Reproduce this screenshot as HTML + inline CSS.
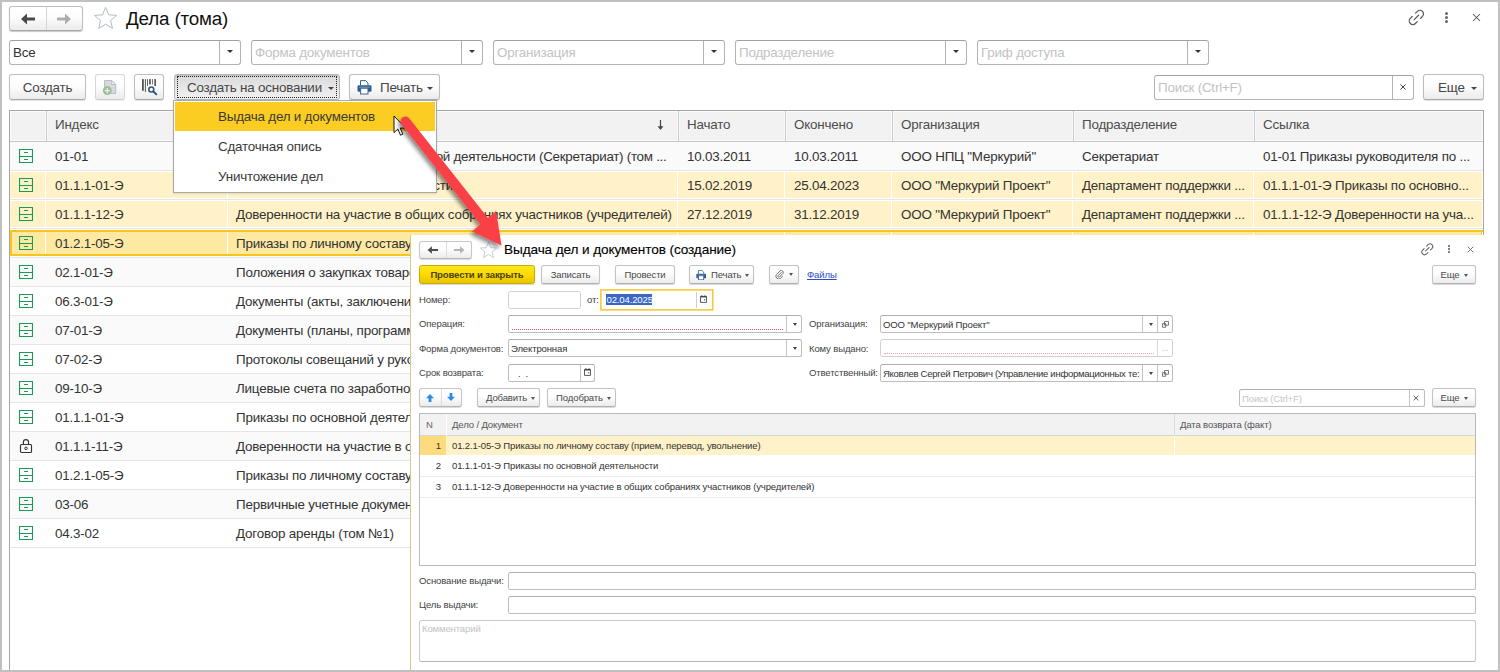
<!DOCTYPE html>
<html lang="ru"><head><meta charset="utf-8"><title>Дела (тома)</title>
<style>
html,body{margin:0;padding:0}
body{width:1500px;height:672px;position:relative;overflow:hidden;background:#fff;font-family:"Liberation Sans",sans-serif;font-size:13.4px;letter-spacing:-0.2px;color:#333;line-height:1}
div,span,a{box-sizing:border-box}
.a{position:absolute}
.frame{position:absolute;left:0;top:0;width:1500px;height:672px;border:2px solid #c0c0c0;z-index:50;pointer-events:none}
/* buttons */
.btn{position:absolute;height:26px;border:1px solid #bdbdbd;border-bottom-color:#a9a9a9;border-radius:3px;background:linear-gradient(#ffffff 0%,#fdfdfd 45%,#ebebeb 100%);box-shadow:0 1px 1px rgba(0,0,0,.13);color:#464646;line-height:25px;text-align:center;white-space:nowrap}
.btn.dis{border-color:#d6d6d6;border-bottom-color:#cdcdcd;box-shadow:0 1px 1px rgba(0,0,0,.07)}
.btn.press{background:linear-gradient(#d9d9d9 0%,#e6e6e6 50%,#f0f0f0 100%);border-color:#b4b4b4;box-shadow:inset 0 1px 1px rgba(0,0,0,.12)}
.caret{display:inline-block;width:0;height:0;border-left:3px solid transparent;border-right:3px solid transparent;border-top:3px solid #444}
/* inputs */
.inp{position:absolute;height:25px;border:1px solid #b3b3b3;border-top-color:#a2a2a2;border-radius:3px;background:#fff;line-height:23px;white-space:nowrap;overflow:hidden}
.inp .t{position:absolute;left:3px;top:0;color:#333}
.inp .ph{color:#c3c3c3}
.inp .dd{position:absolute;right:0;top:0;bottom:0;width:21px;border-left:1px solid #b3b3b3}
.inp .dd i{position:absolute;left:6.5px;top:9px;width:0;height:0;border-left:3px solid transparent;border-right:3px solid transparent;border-top:3.3px solid #333}
/* table */

.tbl{position:absolute;left:9px;top:110px;width:1475px;height:562px;border:1px solid #a6a6a6;border-bottom:none;background:#fff}
.thead{position:absolute;left:0;top:0;width:1473px;height:31px;background:#f2f2f2;border-bottom:1px solid #c6c6c6}
.th{position:absolute;top:0;height:30px;line-height:28px;padding-left:8px;color:#4d4d4d;border-right:1px solid #c9c9c9;box-shadow:inset 0 0 0 1px #fbfbfb;white-space:nowrap}
.th.last{border-right:none}
.sortarrow{position:absolute;left:647px;top:8px}
.tr{position:absolute;left:0;width:1473px;height:29px;background:#fff;border-bottom:1px solid #e6e6e6}
.tr.alt{background:#fafafa}
.tr.hl{background:#fff}
.tr.sel{background:#fff}
.tr .bg{position:absolute;left:0;top:1px;width:1473px;height:26px}
.tr.hl .bg{background:#fff2c8}
.tr.sel .bg{background:#fde9a2;box-shadow:inset 0 0 0 2px #f9c51c}
.td{position:absolute;top:0;height:28px;line-height:30px;padding-left:8px;color:#333;white-space:nowrap;overflow:hidden}
.tr.hl .td,.tr.sel .td{border-right:1px solid #fff;top:1px;height:26px;line-height:28px}
.tr.sel .td{top:3px;height:22px;line-height:24px}
.tr.hl .ic,.tr.sel .ic{top:6px}
.tr.sel .ic{top:4px}
.ic{position:absolute;left:9px;top:7px}
.nav{border:1px solid #bdbdbd;border-bottom-color:#a9a9a9;border-radius:3px;background:linear-gradient(#ffffff 0%,#fdfdfd 45%,#ebebeb 100%);box-shadow:0 1px 1px rgba(0,0,0,.22)}
.menu{background:#fff;border:1px solid #a9a9a9;box-shadow:0 1px 2px rgba(0,0,0,.10)}
.mi{height:29px;line-height:29px;color:#3a3a3a;white-space:nowrap}
/* overlay */
.ov{position:absolute;left:410px;top:235px;width:1088px;height:437px;background:#fff;border-left:1px solid #d6c98f}
.o{position:absolute;font-size:9.55px;letter-spacing:-0.14px;line-height:11px;color:#444;white-space:nowrap}
.ob{position:absolute;height:19px;border:1px solid #c3c3c3;border-bottom-color:#b0b0b0;border-radius:2.5px;background:linear-gradient(#ffffff 0%,#fdfdfd 45%,#ececec 100%);box-shadow:0 1px 1px rgba(0,0,0,.16);color:#4a4a4a;font-size:9.55px;letter-spacing:-0.14px;line-height:17.6px;text-align:center;white-space:nowrap}
.ob.y{background:linear-gradient(#ffe81a 0%,#fbd800 55%,#e8c400 100%);border-color:#c9aa00;color:#4a4200;font-weight:bold}
.oc{display:inline-block;width:0;height:0;border-left:2.5px solid transparent;border-right:2.5px solid transparent;border-top:3px solid #555;vertical-align:middle;margin-left:4px}
.oi{position:absolute;height:18px;border:1px solid #bdbdbd;border-top-color:#adadad;border-radius:2.5px;background:#fff;font-size:9.55px;letter-spacing:-0.14px;line-height:16px;white-space:nowrap;overflow:hidden;color:#333}
.oi .t{position:absolute;left:2px;top:0.5px}
.oi .dd{position:absolute;top:0;bottom:0;width:1px;background:#c4c4c4}
.oi .ar{position:absolute;top:7px;width:0;height:0;border-left:2.5px solid transparent;border-right:2.5px solid transparent;border-top:3px solid #444}
.oi .req{position:absolute;left:3px;right:18px;bottom:2px;border-bottom:1px dotted #f0505a}
.otbl{position:absolute;left:419px;top:413px;width:1057px;height:153px;border:1px solid #b9b9b9;background:#fff}
.oth{position:absolute;left:0;top:0;width:1055px;height:22px;background:#f2f2f2;border-bottom:1px solid #d6d6d6}
.otr{position:absolute;left:0;width:1055px;height:21px;border-bottom:1px solid #ebebeb}
</style></head><body>
<!-- ===== main window header ===== -->
<div class="nav a" style="left:9px;top:6px;width:74px;height:25px">
  <div class="a" style="left:36px;top:0;width:1px;height:23px;background:#d4d4d4"></div>
  <svg class="a" style="left:11px;top:6px" width="15" height="12" viewBox="0 0 15 12"><path d="M0 6L6 0.6V4.4H14V7.6H6V11.4z" fill="#4a4a4a"/></svg>
  <svg class="a" style="left:47px;top:6px" width="15" height="12" viewBox="0 0 15 12"><path d="M14 6L8 0.6V4.4H0V7.6H8V11.4z" fill="#adadad"/></svg>
</div>
<svg class="a" style="left:93px;top:6px" width="26" height="25" viewBox="0 0 26 25"><path d="M12.6 1.4l3.1 7.4 8 .6-6.1 5.2 1.9 7.8-6.9-4.2-6.9 4.2 1.9-7.8-6.1-5.2 8-.6z" fill="none" stroke="#b4bcc4" stroke-width="1"/></svg>
<div class="a" style="left:126px;top:8px;font-size:18.8px;letter-spacing:-0.15px;line-height:22px;color:#111;white-space:nowrap">Дела (тома)</div>

<!-- top-right icons -->
<svg class="a" style="left:1406px;top:7px" width="21" height="21" viewBox="0 0 21 21"><g transform="translate(10.4 10.4) rotate(-45)" fill="none" stroke="#5a5a5a" stroke-width="1.25" stroke-linecap="round"><path d="M2.4-3.6H5A3.6 3.6 0 0 1 5 3.6H2.4"/><path d="M-2.4-3.6H-5A3.6 3.6 0 0 0-5 3.6H-2.4"/><path d="M-3.1 0H3.1"/></g></svg>
<div class="a" style="left:1445px;top:12px;width:3px;height:3px;border-radius:50%;background:#666"></div>
<div class="a" style="left:1445px;top:16px;width:3px;height:3px;border-radius:50%;background:#666"></div>
<div class="a" style="left:1445px;top:20px;width:3px;height:3px;border-radius:50%;background:#666"></div>
<svg class="a" style="left:1472px;top:13px" width="9" height="9" viewBox="0 0 9 9"><path d="M1 1l7 7M8 1l-7 7" stroke="#555" stroke-width="1.05" fill="none"/></svg>

<!-- filter row -->
<div class="inp" style="left:9px;top:40px;width:232px"><span class="t">Все</span><span class="dd"><i></i></span></div>
<div class="inp" style="left:251px;top:40px;width:232px"><span class="t ph">Форма документов</span><span class="dd"><i></i></span></div>
<div class="inp" style="left:493px;top:40px;width:232px"><span class="t ph">Организация</span><span class="dd"><i></i></span></div>
<div class="inp" style="left:735px;top:40px;width:232px"><span class="t ph">Подразделение</span><span class="dd"><i></i></span></div>
<div class="inp" style="left:977px;top:40px;width:232px"><span class="t ph">Гриф доступа</span><span class="dd"><i></i></span></div>

<!-- command bar -->
<div class="btn" style="left:9px;top:74px;width:77px">Создать</div>
<div class="btn dis" style="left:95px;top:74px;width:30px"></div>
<svg class="a" style="left:95px;top:75px" width="30" height="25" viewBox="0 0 30 25"><path d="M9.5 5.5h7.2l4 4V18.6H9.5z" fill="#d9d9d9" stroke="#aebbcd" stroke-width="0.9"/><path d="M16.7 5.5v4h4z" fill="#f1f3f6" stroke="#aebbcd" stroke-width="0.9"/><circle cx="12.3" cy="15.6" r="4.5" fill="#9ebf9f"/><path d="M12.3 12.9v5.4M9.6 15.6h5.4" stroke="#e9f1e9" stroke-width="1.3"/></svg>
<div class="btn" style="left:134px;top:74px;width:30px"></div>
<svg class="a" style="left:134px;top:75px" width="30" height="25" viewBox="0 0 30 25"><g fill="#555"><rect x="8" y="4.1" width="1.8" height="11.7"/><rect x="10.9" y="4.1" width="1" height="12.8"/><rect x="13" y="4.1" width="0.9" height="6.9"/><rect x="15.1" y="4.1" width="1.7" height="5.3"/><rect x="18.1" y="4.1" width="0.8" height="5.3"/><rect x="20.3" y="4.1" width="1.7" height="6.9"/></g><circle cx="17.3" cy="14.5" r="2.5" fill="#fff" stroke="#34557f" stroke-width="1.6"/><path d="M19.3 16.5l3 2.8" stroke="#34557f" stroke-width="1.9" stroke-linecap="round"/></svg>
<div class="btn press" style="left:174px;top:74px;width:166px;text-align:left"><span class="a" style="left:2px;top:1px;right:2px;bottom:1px;border:1px dotted #222"></span><span class="a" style="left:12px;top:0">Создать на основании</span><span class="caret a" style="left:153px;top:12px;margin:0"></span></div>
<div class="btn" style="left:349px;top:74px;width:91px;text-align:left">
  <svg class="a" style="left:7px;top:5px" width="15" height="15" viewBox="0 0 15 15"><path d="M3.5 5.5V0.6h5L11 3v2.5" fill="#fff" stroke="#3a6496" stroke-width="1"/><rect x="0.5" y="5.2" width="14" height="6.6" rx="1.3" fill="#2f5a8c"/><rect x="3.6" y="8.2" width="7.4" height="5.8" fill="#fff" stroke="#3a6496" stroke-width="1"/><path d="M2.2 7.2h10.6" stroke="#8fb0d4" stroke-width="0.8"/></svg>
  <span class="a" style="left:30px;top:0">Печать</span><span class="caret a" style="left:77px;top:12px;margin:0"></span>
</div>
<div class="inp" style="left:1154px;top:75px;width:260px"><span class="t ph">Поиск (Ctrl+F)</span><span class="dd" style="width:21px"><svg class="a" style="left:6.5px;top:8px" width="6" height="6" viewBox="0 0 6 6"><path d="M.4.4l5.2 5.2M5.6.4L.4 5.6" stroke="#444" stroke-width="1"/></svg></span></div>
<div class="btn" style="left:1423px;top:74px;width:61px;text-align:left"><span class="a" style="left:14px;top:0">Еще</span><span class="caret a" style="left:47px;top:12px;margin:0"></span></div>

<!-- ===== list table ===== -->
<div class="tbl">
<div class="thead">
<div class="th" style="left:0px;width:37px"></div>
<div class="th" style="left:37px;width:182px">Индекс</div>
<div class="th" style="left:219px;width:450px"></div>
<div class="th" style="left:669px;width:107px">Начато</div>
<div class="th" style="left:776px;width:107px">Окончено</div>
<div class="th" style="left:883px;width:181px">Организация</div>
<div class="th" style="left:1064px;width:181px">Подразделение</div>
<div class="th last" style="left:1245px;width:228px">Ссылка</div>
<svg class="sortarrow" width="8" height="12" viewBox="0 0 8 12"><path d="M3.5 1v9" stroke="#444" stroke-width="1.2" fill="none"/><path d="M1.2 7.6L3.5 10.6L5.8 7.6z" fill="#444" stroke="#444" stroke-width="0.6" stroke-linejoin="round"/></svg>
</div>
<div class="tr alt" style="top:31px">
<div class="td" style="left:0;width:36px"><svg class="ic" width="14" height="14" viewBox="0 0 14 14"><path d="M0.5 0.5h13v13h-13zM0.5 7.5h13M5 3.5h4M5 10.5h4" fill="none" stroke="#1a9a52" stroke-width="1.15"/></svg></div>
<div class="td" style="left:37px;width:181px"><span>01-01</span></div>
<div class="td" style="left:219px;width:449px;padding-left:7px"><span><span style="letter-spacing:-0.28px">Приказы руководителя по основной деятельности (Секретариат) (том ...</span></span></div>
<div class="td" style="left:669px;width:106px"><span>10.03.2011</span></div>
<div class="td" style="left:776px;width:106px"><span>10.03.2011</span></div>
<div class="td" style="left:883px;width:180px"><span>ООО НПЦ "Меркурий"</span></div>
<div class="td" style="left:1064px;width:180px"><span>Секретариат</span></div>
<div class="td" style="left:1245px;width:228px"><span>01-01 Приказы руководителя по ...</span></div>
</div>
<div class="tr hl" style="top:60px">
<div class="bg"></div>
<div class="td" style="left:0;width:36px"><svg class="ic" width="14" height="14" viewBox="0 0 14 14"><path d="M0.5 0.5h13v13h-13zM0.5 7.5h13M5 3.5h4M5 10.5h4" fill="none" stroke="#1a9a52" stroke-width="1.15"/></svg></div>
<div class="td" style="left:37px;width:181px"><span>01.1.1-01-Э</span></div>
<div class="td" style="left:219px;width:449px;padding-left:7px"><span>Приказы по основной деятельности</span></div>
<div class="td" style="left:669px;width:106px"><span>15.02.2019</span></div>
<div class="td" style="left:776px;width:106px"><span>25.04.2023</span></div>
<div class="td" style="left:883px;width:180px"><span>ООО "Меркурий Проект"</span></div>
<div class="td" style="left:1064px;width:180px"><span>Департамент поддержки ...</span></div>
<div class="td" style="left:1245px;width:228px"><span>01.1.1-01-Э Приказы по основно...</span></div>
</div>
<div class="tr hl" style="top:89px">
<div class="bg"></div>
<div class="td" style="left:0;width:36px"><svg class="ic" width="14" height="14" viewBox="0 0 14 14"><path d="M0.5 0.5h13v13h-13zM0.5 7.5h13M5 3.5h4M5 10.5h4" fill="none" stroke="#1a9a52" stroke-width="1.15"/></svg></div>
<div class="td" style="left:37px;width:181px"><span>01.1.1-12-Э</span></div>
<div class="td" style="left:219px;width:449px;padding-left:7px"><span>Доверенности на участие в общих собраниях участников (учредителей)</span></div>
<div class="td" style="left:669px;width:106px"><span>27.12.2019</span></div>
<div class="td" style="left:776px;width:106px"><span>31.12.2019</span></div>
<div class="td" style="left:883px;width:180px"><span>ООО "Меркурий Проект"</span></div>
<div class="td" style="left:1064px;width:180px"><span>Департамент поддержки ...</span></div>
<div class="td" style="left:1245px;width:228px"><span>01.1.1-12-Э Доверенности на уча...</span></div>
</div>
<div class="tr sel" style="top:118px">
<div class="bg"></div>
<div class="td" style="left:0;width:36px"><svg class="ic" width="14" height="14" viewBox="0 0 14 14"><path d="M0.5 0.5h13v13h-13zM0.5 7.5h13M5 3.5h4M5 10.5h4" fill="none" stroke="#1a9a52" stroke-width="1.15"/></svg></div>
<div class="td" style="left:37px;width:181px"><span>01.2.1-05-Э</span></div>
<div class="td" style="left:219px;width:449px;padding-left:7px"><span>Приказы по личному составу (прием, перевод, увольнение)</span></div>
<div class="td" style="left:669px;width:106px"><span></span></div>
<div class="td" style="left:776px;width:106px"><span></span></div>
<div class="td" style="left:883px;width:180px"><span></span></div>
<div class="td" style="left:1064px;width:180px"><span></span></div>
<div class="td" style="left:1245px;width:228px"><span></span></div>
</div>
<div class="tr alt" style="top:147px">
<div class="td" style="left:0;width:36px"><svg class="ic" width="14" height="14" viewBox="0 0 14 14"><path d="M0.5 0.5h13v13h-13zM0.5 7.5h13M5 3.5h4M5 10.5h4" fill="none" stroke="#1a9a52" stroke-width="1.15"/></svg></div>
<div class="td" style="left:37px;width:181px"><span>02.1-01-Э</span></div>
<div class="td" style="left:219px;width:449px;padding-left:7px"><span>Положения о закупках товаров, работ, услуг</span></div>
<div class="td" style="left:669px;width:106px"><span></span></div>
<div class="td" style="left:776px;width:106px"><span></span></div>
<div class="td" style="left:883px;width:180px"><span></span></div>
<div class="td" style="left:1064px;width:180px"><span></span></div>
<div class="td" style="left:1245px;width:228px"><span></span></div>
</div>
<div class="tr" style="top:176px">
<div class="td" style="left:0;width:36px"><svg class="ic" width="14" height="14" viewBox="0 0 14 14"><path d="M0.5 0.5h13v13h-13zM0.5 7.5h13M5 3.5h4M5 10.5h4" fill="none" stroke="#1a9a52" stroke-width="1.15"/></svg></div>
<div class="td" style="left:37px;width:181px"><span>06.3-01-Э</span></div>
<div class="td" style="left:219px;width:449px;padding-left:7px"><span>Документы (акты, заключения, справки) проверок</span></div>
<div class="td" style="left:669px;width:106px"><span></span></div>
<div class="td" style="left:776px;width:106px"><span></span></div>
<div class="td" style="left:883px;width:180px"><span></span></div>
<div class="td" style="left:1064px;width:180px"><span></span></div>
<div class="td" style="left:1245px;width:228px"><span></span></div>
</div>
<div class="tr alt" style="top:205px">
<div class="td" style="left:0;width:36px"><svg class="ic" width="14" height="14" viewBox="0 0 14 14"><path d="M0.5 0.5h13v13h-13zM0.5 7.5h13M5 3.5h4M5 10.5h4" fill="none" stroke="#1a9a52" stroke-width="1.15"/></svg></div>
<div class="td" style="left:37px;width:181px"><span>07-01-Э</span></div>
<div class="td" style="left:219px;width:449px;padding-left:7px"><span>Документы (планы, программы, отчеты) по проектам</span></div>
<div class="td" style="left:669px;width:106px"><span></span></div>
<div class="td" style="left:776px;width:106px"><span></span></div>
<div class="td" style="left:883px;width:180px"><span></span></div>
<div class="td" style="left:1064px;width:180px"><span></span></div>
<div class="td" style="left:1245px;width:228px"><span></span></div>
</div>
<div class="tr" style="top:234px">
<div class="td" style="left:0;width:36px"><svg class="ic" width="14" height="14" viewBox="0 0 14 14"><path d="M0.5 0.5h13v13h-13zM0.5 7.5h13M5 3.5h4M5 10.5h4" fill="none" stroke="#1a9a52" stroke-width="1.15"/></svg></div>
<div class="td" style="left:37px;width:181px"><span>07-02-Э</span></div>
<div class="td" style="left:219px;width:449px;padding-left:7px"><span>Протоколы совещаний у руководителя</span></div>
<div class="td" style="left:669px;width:106px"><span></span></div>
<div class="td" style="left:776px;width:106px"><span></span></div>
<div class="td" style="left:883px;width:180px"><span></span></div>
<div class="td" style="left:1064px;width:180px"><span></span></div>
<div class="td" style="left:1245px;width:228px"><span></span></div>
</div>
<div class="tr alt" style="top:263px">
<div class="td" style="left:0;width:36px"><svg class="ic" width="14" height="14" viewBox="0 0 14 14"><path d="M0.5 0.5h13v13h-13zM0.5 7.5h13M5 3.5h4M5 10.5h4" fill="none" stroke="#1a9a52" stroke-width="1.15"/></svg></div>
<div class="td" style="left:37px;width:181px"><span>09-10-Э</span></div>
<div class="td" style="left:219px;width:449px;padding-left:7px"><span>Лицевые счета по заработной плате</span></div>
<div class="td" style="left:669px;width:106px"><span></span></div>
<div class="td" style="left:776px;width:106px"><span></span></div>
<div class="td" style="left:883px;width:180px"><span></span></div>
<div class="td" style="left:1064px;width:180px"><span></span></div>
<div class="td" style="left:1245px;width:228px"><span></span></div>
</div>
<div class="tr" style="top:292px">
<div class="td" style="left:0;width:36px"><svg class="ic" width="14" height="14" viewBox="0 0 14 14"><path d="M0.5 0.5h13v13h-13zM0.5 7.5h13M5 3.5h4M5 10.5h4" fill="none" stroke="#1a9a52" stroke-width="1.15"/></svg></div>
<div class="td" style="left:37px;width:181px"><span>01.1.1-01-Э</span></div>
<div class="td" style="left:219px;width:449px;padding-left:7px"><span>Приказы по основной деятельности</span></div>
<div class="td" style="left:669px;width:106px"><span></span></div>
<div class="td" style="left:776px;width:106px"><span></span></div>
<div class="td" style="left:883px;width:180px"><span></span></div>
<div class="td" style="left:1064px;width:180px"><span></span></div>
<div class="td" style="left:1245px;width:228px"><span></span></div>
</div>
<div class="tr alt" style="top:321px">
<div class="td" style="left:0;width:36px"><svg class="ic" width="14" height="17" viewBox="0 0 14 17" style="top:5px"><rect x="1.5" y="7.5" width="11" height="8" rx="1" fill="none" stroke="#333" stroke-width="1.15"/><path d="M4.4 7.5V5.1a2.55 2.55 0 0 1 5.1 0V7.5" fill="none" stroke="#333" stroke-width="1.15"/><circle cx="7" cy="11.3" r="1.3" fill="none" stroke="#333" stroke-width="1"/></svg></div>
<div class="td" style="left:37px;width:181px"><span>01.1.1-11-Э</span></div>
<div class="td" style="left:219px;width:449px;padding-left:7px"><span>Доверенности на участие в общих собраниях</span></div>
<div class="td" style="left:669px;width:106px"><span></span></div>
<div class="td" style="left:776px;width:106px"><span></span></div>
<div class="td" style="left:883px;width:180px"><span></span></div>
<div class="td" style="left:1064px;width:180px"><span></span></div>
<div class="td" style="left:1245px;width:228px"><span></span></div>
</div>
<div class="tr" style="top:350px">
<div class="td" style="left:0;width:36px"><svg class="ic" width="14" height="14" viewBox="0 0 14 14"><path d="M0.5 0.5h13v13h-13zM0.5 7.5h13M5 3.5h4M5 10.5h4" fill="none" stroke="#1a9a52" stroke-width="1.15"/></svg></div>
<div class="td" style="left:37px;width:181px"><span>01.2.1-05-Э</span></div>
<div class="td" style="left:219px;width:449px;padding-left:7px"><span>Приказы по личному составу (прием, перевод)</span></div>
<div class="td" style="left:669px;width:106px"><span></span></div>
<div class="td" style="left:776px;width:106px"><span></span></div>
<div class="td" style="left:883px;width:180px"><span></span></div>
<div class="td" style="left:1064px;width:180px"><span></span></div>
<div class="td" style="left:1245px;width:228px"><span></span></div>
</div>
<div class="tr alt" style="top:379px">
<div class="td" style="left:0;width:36px"><svg class="ic" width="14" height="14" viewBox="0 0 14 14"><path d="M0.5 0.5h13v13h-13zM0.5 7.5h13M5 3.5h4M5 10.5h4" fill="none" stroke="#1a9a52" stroke-width="1.15"/></svg></div>
<div class="td" style="left:37px;width:181px"><span>03-06</span></div>
<div class="td" style="left:219px;width:449px;padding-left:7px"><span>Первичные учетные документы</span></div>
<div class="td" style="left:669px;width:106px"><span></span></div>
<div class="td" style="left:776px;width:106px"><span></span></div>
<div class="td" style="left:883px;width:180px"><span></span></div>
<div class="td" style="left:1064px;width:180px"><span></span></div>
<div class="td" style="left:1245px;width:228px"><span></span></div>
</div>
<div class="tr" style="top:408px">
<div class="td" style="left:0;width:36px"><svg class="ic" width="14" height="14" viewBox="0 0 14 14"><path d="M0.5 0.5h13v13h-13zM0.5 7.5h13M5 3.5h4M5 10.5h4" fill="none" stroke="#1a9a52" stroke-width="1.15"/></svg></div>
<div class="td" style="left:37px;width:181px"><span>04.3-02</span></div>
<div class="td" style="left:219px;width:449px;padding-left:7px"><span>Договор аренды (том №1)</span></div>
<div class="td" style="left:669px;width:106px"><span></span></div>
<div class="td" style="left:776px;width:106px"><span></span></div>
<div class="td" style="left:883px;width:180px"><span></span></div>
<div class="td" style="left:1064px;width:180px"><span></span></div>
<div class="td" style="left:1245px;width:228px"><span></span></div>
</div></div>
<!-- dropdown menu -->
<div class="a menu" style="left:173px;top:100px;width:264px;height:93px">
  <div class="a" style="left:1px;top:1px;width:260px;height:29px;background:#fbcd22"></div>
  <div class="a mi" style="left:44px;top:1px">Выдача дел и документов</div>
  <div class="a mi" style="left:44px;top:31px">Сдаточная опись</div>
  <div class="a mi" style="left:44px;top:61px">Уничтожение дел</div>
</div>
<!-- ===== overlay window ===== -->
<div class="ov"></div>
<div class="nav a" style="left:419px;top:241px;width:53px;height:18px;border-color:#c6c6c6;border-bottom-color:#b4b4b4;box-shadow:0 1px 1px rgba(0,0,0,.15)">
  <div class="a" style="left:26px;top:0;width:1px;height:16px;background:#dcdcdc"></div>
  <svg class="a" style="left:7px;top:4px" width="12" height="8" viewBox="0 0 16 11"><path d="M0.5 5.5L6.5 0.5V4H15V7H6.5V10.5z" fill="#4f4f4f"/></svg>
  <svg class="a" style="left:33px;top:4px" width="12" height="8" viewBox="0 0 16 11"><path d="M15.5 5.5L9.5 0.5V4H1V7H9.5V10.5z" fill="#b4b4b4"/></svg>
</div>
<svg class="a" style="left:479px;top:241px" width="19" height="18" viewBox="0 0 26 25"><path d="M13 1.6l3.1 7.6 8.2.6-6.3 5.3 2 8-7-4.4-7 4.4 2-8-6.3-5.3 8.2-.6z" fill="none" stroke="#c3c9cf" stroke-width="1.3"/></svg>
<div class="a" style="left:504px;top:242px;font-size:13.6px;letter-spacing:-0.1px;line-height:16px;color:#000;-webkit-text-stroke:0.12px #000;white-space:nowrap">Выдача дел и документов (создание)</div>
<svg class="a" style="left:1419px;top:241px" width="16" height="16" viewBox="0 0 21 21"><g transform="translate(10.9 10.9) rotate(-45)" fill="none" stroke="#666" stroke-width="1.4" stroke-linecap="round"><path d="M2.4-3.6H5A3.6 3.6 0 0 1 5 3.6H2.4"/><path d="M-2.4-3.6H-5A3.6 3.6 0 0 0-5 3.6H-2.4"/><path d="M-3.1 0H3.1"/></g></svg>
<div class="a" style="left:1448px;top:245px;width:2px;height:2px;border-radius:50%;background:#555"></div>
<div class="a" style="left:1448px;top:248px;width:2px;height:2px;border-radius:50%;background:#555"></div>
<div class="a" style="left:1448px;top:251px;width:2px;height:2px;border-radius:50%;background:#555"></div>
<svg class="a" style="left:1467px;top:246px" width="7" height="7" viewBox="0 0 7 7"><path d="M.8.8l5.4 5.4M6.2.8L.8 6.2" stroke="#666" stroke-width="0.9" fill="none"/></svg>

<div class="ob y" style="left:419px;top:265px;width:116px">Провести и закрыть</div>
<div class="ob" style="left:541px;top:265px;width:59px">Записать</div>
<div class="ob" style="left:615px;top:265px;width:60px">Провести</div>
<div class="ob" style="left:689px;top:265px;width:65px;text-align:left">
  <svg class="a" style="left:5.5px;top:3.5px" width="10.5" height="10.5" viewBox="0 0 15 15"><path d="M3.5 5.5V0.6h5L11 3v2.5" fill="#fff" stroke="#3a6496" stroke-width="1.2"/><rect x="0.5" y="5.2" width="14" height="6.6" rx="1.3" fill="#2f5a8c"/><rect x="3.6" y="8.2" width="7.4" height="5.8" fill="#fff" stroke="#3a6496" stroke-width="1.2"/><path d="M2.2 7.2h10.6" stroke="#8fb0d4" stroke-width="0.8"/></svg>
  <span class="a" style="left:21px;top:0">Печать<span class="oc"></span></span>
</div>
<div class="ob" style="left:769px;top:265px;width:30px">
  <svg class="a" style="left:5px;top:4px" width="9" height="9" viewBox="0 0 9 9"><path d="M6.7 2.1L3 5.8a1 1 0 0 0 1.3 1.3L8 3.4A2 2 0 0 0 5.3.7L1.4 4.6a2.8 2.8 0 0 0 3.9 3.9L7.9 6" fill="none" stroke="#666" stroke-width="0.9"/></svg>
  <span class="oc" style="position:absolute;left:19px;top:7px;margin:0"></span>
</div>
<a class="o" style="left:807px;top:269px;color:#2b4ec7;text-decoration:underline">Файлы</a>
<div class="ob" style="left:1432px;top:265px;width:44px">Еще<span class="oc"></span></div>

<div class="o" style="left:419px;top:294px">Номер:</div>
<div class="oi" style="left:508px;top:291px;width:73px;border-color:#d2d2d2"></div>
<div class="o" style="left:587px;top:294px">от:</div>
<svg class="a" style="left:598px;top:287px" width="118" height="26" viewBox="598 287 118 26"><rect x="600.9" y="289.9" width="111.9" height="20" fill="#fff" stroke="#f9c62c" stroke-width="1.5"/></svg>
<div class="a" style="left:606px;top:294px;width:46px;height:11px;background:#3a66c4"></div>
<div class="o" style="left:606.5px;top:293.5px;color:#fff">02.04.2025</div>
<div class="a" style="left:696px;top:292px;width:1px;height:16px;background:#cfcfcf"></div>
<svg class="a cal" style="left:700px;top:295px" width="7" height="8" viewBox="0 0 8 9"><path d="M.6 1.6h6.8v6.8H.6z" fill="#fff" stroke="#444" stroke-width="1"/><path d="M.6 2h6.8" stroke="#444" stroke-width="1.4"/><path d="M2.2 0v2M5.8 0v2" stroke="#444" stroke-width="1"/><path d="M4.6 4.6h1.3v1.6H4.6z" fill="#777"/></svg>

<div class="o" style="left:419px;top:318px">Операция:</div>
<div class="oi" style="left:508px;top:315px;width:294px"><span class="req"></span><span class="dd" style="right:14px"></span><span class="ar" style="right:4.5px"></span></div>
<div class="o" style="left:809px;top:318px">Организация:</div>
<div class="oi" style="left:880px;top:315px;width:293px"><span class="t">ООО "Меркурий Проект"</span><span class="dd" style="right:29px"></span><span class="ar" style="right:19.5px"></span><span class="dd" style="right:14px"></span>
  <svg class="a" style="right:3.5px;top:4.5px" width="7" height="7" viewBox="0 0 8 8"><path d="M2.8.6h4.6v4.2H2.8zM.6 3h3.6v4.2H.6z" fill="#fff" stroke="#555" stroke-width="0.9"/></svg></div>

<div class="o" style="left:419px;top:342.5px">Форма документов:</div>
<div class="oi" style="left:508px;top:339px;width:294px"><span class="t">Электронная</span><span class="dd" style="right:14px"></span><span class="ar" style="right:4.5px"></span></div>
<div class="o" style="left:809px;top:342.5px">Кому выдано:</div>
<div class="oi" style="left:880px;top:339px;width:293px;border-color:#d0d0d0"><span class="req" style="border-color:#f7a0a6"></span><span class="dd" style="right:14px;background:#dadada"></span><span class="a" style="right:4px;top:1px;color:#aaa;font-size:8px">...</span></div>

<div class="o" style="left:419px;top:366.5px">Срок возврата:</div>
<div class="oi" style="left:508px;top:364px;width:87px"><span class="t" style="left:9px">.&nbsp;&nbsp;.</span><span class="dd" style="right:13px"></span>
  <svg class="a" style="right:3px;top:3px" width="7" height="8" viewBox="0 0 8 9"><path d="M.6 1.6h6.8v6.8H.6z" fill="#fff" stroke="#444" stroke-width="1"/><path d="M.6 2h6.8" stroke="#444" stroke-width="1.4"/><path d="M2.2 0v2M5.8 0v2" stroke="#444" stroke-width="1"/><path d="M4.6 4.6h1.3v1.6H4.6z" fill="#777"/></svg></div>
<div class="o" style="left:809px;top:366.5px">Ответственный:</div>
<div class="oi" style="left:880px;top:364px;width:293px"><span class="t" style="letter-spacing:-0.29px">Яковлев Сергей Петрович (Управление информационных те:</span><span class="dd" style="right:29px"></span><span class="a" style="right:15px;top:1px;width:14px;bottom:1px;background:#fff"></span><span class="ar" style="right:19.5px"></span><span class="dd" style="right:14px"></span>
  <svg class="a" style="right:3.5px;top:4.5px" width="7" height="7" viewBox="0 0 8 8"><path d="M2.8.6h4.6v4.2H2.8zM.6 3h3.6v4.2H.6z" fill="#fff" stroke="#555" stroke-width="0.9"/></svg></div>

<!-- table toolbar -->
<div class="nav a" style="left:419px;top:388px;width:43px;height:19px;border-color:#c6c6c6;border-bottom-color:#b4b4b4;box-shadow:0 1px 1px rgba(0,0,0,.15)">
  <div class="a" style="left:21px;top:0;width:1px;height:17px;background:#dcdcdc"></div>
  <svg class="a" style="left:6px;top:5px" width="8" height="8" viewBox="0 0 8 8"><path d="M4 0L8 4.2H5.4V8H2.6V4.2H0z" fill="#2c8ce0"/></svg>
  <svg class="a" style="left:27px;top:4px" width="8" height="8" viewBox="0 0 8 8"><path d="M4 8L8 3.8H5.4V0H2.6V3.8H0z" fill="#2c8ce0"/></svg>
</div>
<div class="ob" style="left:477px;top:388px;width:63px;padding-left:4px">Добавить<span class="oc"></span></div>
<div class="ob" style="left:547px;top:388px;width:69px;padding-left:4px">Подобрать<span class="oc"></span></div>
<div class="oi" style="left:1239px;top:389px;width:186px"><span class="t" style="color:#c6c6c6">Поиск (Ctrl+F)</span><span class="dd" style="right:14px"></span>
  <svg class="a" style="right:5px;top:5px" width="6" height="6" viewBox="0 0 6 6"><path d="M.6.6l4.8 4.8M5.4.6L.6 5.4" stroke="#555" stroke-width="0.9"/></svg></div>
<div class="ob" style="left:1432px;top:388px;width:44px">Еще<span class="oc"></span></div>

<!-- overlay table -->
<div class="otbl">
  <div class="oth">
    <div class="o" style="left:6px;top:4.5px;color:#666">N</div>
    <div class="a" style="left:26px;top:0;width:1px;height:22px;background:#fff"></div>
    <div class="o" style="left:32px;top:4.5px;color:#555">Дело / Документ</div>
    <div class="a" style="left:754px;top:0;width:1px;height:22px;background:#dcdcdc"></div>
    <div class="o" style="left:760px;top:4.5px;color:#555">Дата возврата (факт)</div>
  </div>
  <div class="otr" style="top:22px;height:20px;background:#fff2c8;border-bottom:1px solid #fff">
    <div class="a" style="left:0;top:0;width:26px;height:19px;background:#fcdc7c"></div>
    <div class="o" style="left:0;top:3.5px;width:21px;text-align:right;color:#333">1</div>
    <div class="o" style="left:32px;top:3.5px;color:#333">01.2.1-05-Э Приказы по личному составу (прием, перевод, увольнение)</div>
    <div class="a" style="left:754px;top:0;width:1px;height:19px;background:#fff"></div>
  </div>
  <div class="otr" style="top:42px">
    <div class="o" style="left:0;top:4px;width:21px;text-align:right;color:#333">2</div>
    <div class="o" style="left:32px;top:4px;color:#333">01.1.1-01-Э Приказы по основной деятельности</div>
  </div>
  <div class="otr" style="top:63px">
    <div class="o" style="left:0;top:4px;width:21px;text-align:right;color:#333">3</div>
    <div class="o" style="left:32px;top:4px;color:#333">01.1.1-12-Э Доверенности на участие в общих собраниях участников (учредителей)</div>
  </div>
</div>

<div class="o" style="left:419px;top:575px">Основание выдачи:</div>
<div class="oi" style="left:508px;top:572px;width:968px"></div>
<div class="o" style="left:419px;top:599px">Цель выдачи:</div>
<div class="oi" style="left:508px;top:596px;width:968px"></div>
<div class="oi" style="left:419px;top:620px;width:1057px;height:42px;border-color:#c9c9c9;border-bottom-color:#b5b5b5"><span class="t" style="color:#c3c3c3;top:0px">Комментарий</span></div>

<!-- mouse cursor -->
<svg class="a" style="left:393.3px;top:115px" width="14" height="22" viewBox="0 0 14 22"><path d="M1 1v16.6l3.8-3.6 2.7 6.2 2.4-1.1-2.7-6H12.6z" fill="#fff" stroke="#111" stroke-width="1"/></svg>
<!-- red arrow annotation -->
<svg class="a" style="left:380px;top:100px" width="150" height="170" viewBox="380 100 150 170">
  <defs><filter id="sh" x="-30%" y="-30%" width="160%" height="160%"><feGaussianBlur in="SourceAlpha" stdDeviation="2.2"/><feOffset dx="-2" dy="3"/><feComponentTransfer><feFuncA type="linear" slope="0.47"/></feComponentTransfer><feMerge><feMergeNode/><feMergeNode in="SourceGraphic"/></feMerge></filter></defs>
  <g filter="url(#sh)"><path d="M405.5 121.5L484 221" stroke="#fa4146" stroke-width="10" stroke-linecap="round" fill="none"/><path d="M501.5 245.5L472 231.5L496 211z" fill="#fa4146"/></g>
</svg>

<div class="frame"></div>
</body></html>
